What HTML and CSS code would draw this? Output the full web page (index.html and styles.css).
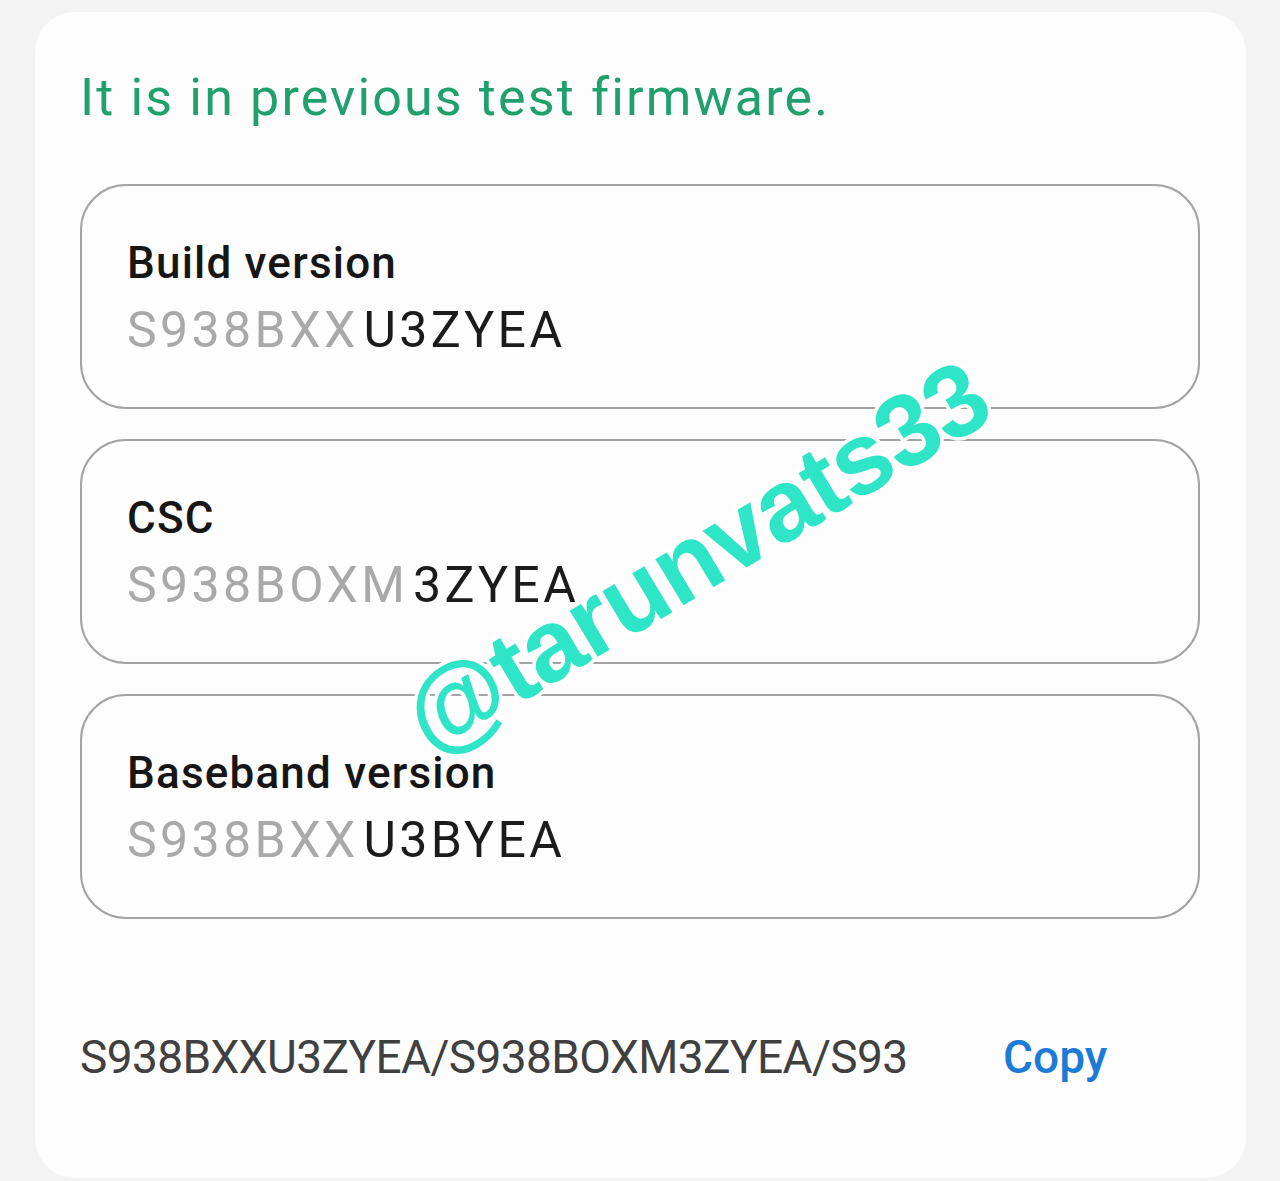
FILE: index.html
```html
<!DOCTYPE html>
<html lang="en">
<head>
<meta charset="utf-8">
<title>Software information</title>
<link rel="stylesheet" href="styles.css">
</head>
<body>
<div class="card">
  <p class="notice">It is in previous test firmware.</p>
  <div class="boxes">
    <div class="box">
      <div class="label">Build version</div>
      <div class="value"><span class="dim">S938BXX</span> <span class="hi">U3ZYEA</span></div>
    </div>
    <div class="box">
      <div class="label">CSC</div>
      <div class="value"><span class="dim">S938BOXM</span> <span class="hi">3ZYEA</span></div>
    </div>
    <div class="box">
      <div class="label">Baseband version</div>
      <div class="value"><span class="dim">S938BXX</span> <span class="hi">U3BYEA</span></div>
    </div>
  </div>
  <div class="footer">
    <div class="full">S938BXXU3ZYEA/S938BOXM3ZYEA/S938BXXU3BYEA</div>
    <div class="copy">Copy</div>
  </div>
  <div class="watermark">@tarunvats33</div>
</div>
</body>
</html>
```
FILE: styles.css
```css
html, body {
  margin: 0;
  padding: 0;
}
body {
  background: #f3f3f3;
  font-family: Roboto, "Noto Sans", sans-serif;
  width: 1280px;
  height: 1181px;
  overflow: hidden;
}
.card {
  position: relative;
  margin: 12px 0 0 35px;
  width: 1211px;
  height: 1166px;
  background: #fdfdfd;
  border-radius: 40px;
  padding: 0 46px 0 45px;
  box-sizing: border-box;
}
.notice {
  margin: 0;
  padding-top: 56px;
  font-size: 52px;
  line-height: 60px;
  letter-spacing: 2.15px;
  color: #20a06d;
  height: 116px;
  box-sizing: border-box;
}
.boxes {
  display: flex;
  flex-direction: column;
  gap: 30px;
  margin-top: 56px;
}
.box {
  height: 225px;
  box-sizing: border-box;
  border: 2px solid #a3a3a3;
  border-radius: 46px;
  padding: 52px 45px 0;
}
.label {
  font-size: 44px;
  line-height: 50px;
  font-weight: 500;
  letter-spacing: 1.2px;
  color: #161616;
}
.value {
  margin-top: 14px;
  font-size: 50px;
  line-height: 56px;
  letter-spacing: 3.4px;
  word-spacing: -11px;
}
.dim {
  color: #a9a9a9;
}
.hi {
  color: #1b1b1b;
}
.footer {
  display: flex;
  align-items: center;
  margin-top: 110px;
}
.full {
  width: 827px;
  overflow: hidden;
  white-space: nowrap;
  text-overflow: clip;
  font-size: 46px;
  line-height: 56px;
  letter-spacing: -0.6px;
  color: #404040;
}
.copy {
  margin-left: 96px;
  font-size: 46px;
  line-height: 56px;
  font-weight: 500;
  color: #1b7bd6;
}
.watermark {
  position: absolute;
  left: 661px;
  top: 545px;
  transform: translate(-50%, -50%) rotate(-31deg);
  font-family: "Liberation Sans", Arial, sans-serif;
  font-weight: 700;
  font-size: 102px;
  line-height: 1;
  letter-spacing: -1px;
  color: #2ee5c8;
  -webkit-text-stroke: 7px #ffffff;
  paint-order: stroke fill;
  white-space: nowrap;
}
```
